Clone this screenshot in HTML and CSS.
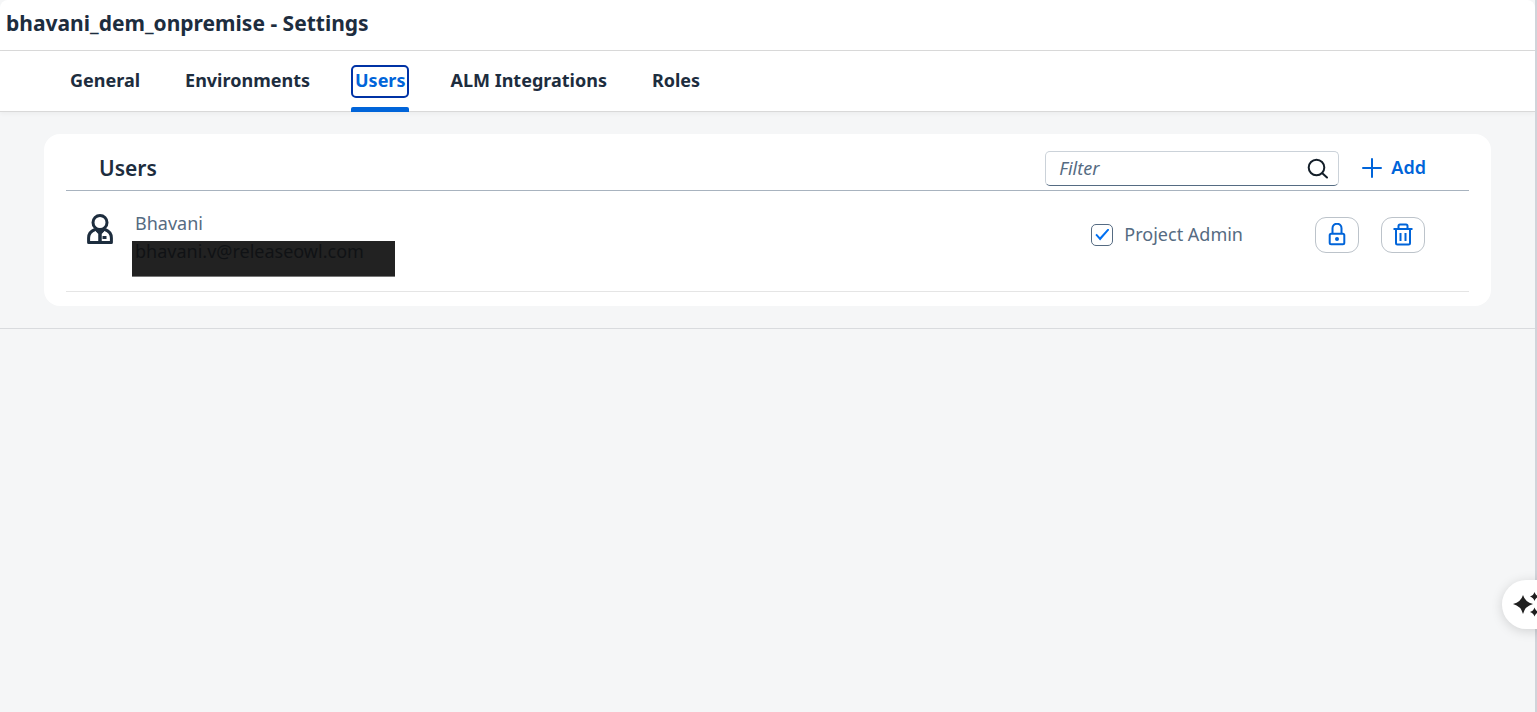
FILE: index.html
```html
<!DOCTYPE html>
<html lang="en">
<head>
<meta charset="utf-8">
<title>bhavani_dem_onpremise - Settings</title>
<link rel="stylesheet" href="styles.css">
</head>
<body>
<div class="page">
  <header class="title-bar"><h1 class="title">bhavani_dem_onpremise - Settings</h1></header>
  <nav class="tabs" aria-label="Settings sections">
    <a class="tab" href="#general"><span class="tab-label">General</span></a>
    <a class="tab" href="#environments"><span class="tab-label">Environments</span></a>
    <a class="tab tab-active" href="#users" aria-current="page"><span class="tab-label">Users</span></a>
    <a class="tab" href="#alm"><span class="tab-label">ALM Integrations</span></a>
    <a class="tab" href="#roles"><span class="tab-label">Roles</span></a>
  </nav>
  <main class="content">
    <section class="card">
      <div class="toolbar">
        <h2 class="card-title">Users</h2>
        <div class="search">
          <input class="search-input" type="text" placeholder="Filter" aria-label="Filter">
          <button class="search-button" type="button" aria-label="Search">
            <svg width="22" height="22" viewBox="0 0 22 22" fill="none" stroke="#131e29" stroke-width="2" stroke-linecap="round"><circle cx="9.500" cy="9.500" r="7.800"/><path d="M15.300 15.300l4.700 4.200"/></svg>
          </button>
        </div>
        <button class="add-button" type="button">
          <svg width="20" height="20" viewBox="0 0 20 20" fill="none" stroke="currentColor" stroke-width="2" stroke-linecap="round"><path d="M10 1v18M1 10h18"/></svg>
          Add
        </button>
      </div>
      <ul class="user-list">
        <li class="user-row">
          <svg class="user-icon" width="26" height="30" viewBox="0 0 26 30" fill="none" stroke="#1d2d3e" stroke-width="3"><circle cx="13" cy="8.500" r="7"/><path d="M8 15.500C4 17 1.600 20 1.600 24v4.400h22.800V24c0-4-2.400-7-6.400-8.500" stroke-linejoin="round"/><path d="M7.500 15.500h11L14.200 20v8h-2.400v-8z" fill="#1d2d3e" stroke-width="1"/><path d="M15.500 23.500h4" stroke-width="3"/></svg>
          <div class="user-info">
            <span class="user-name">Bhavani</span>
            <span class="user-email">bhavani.v@releaseowl.com</span>
          </div>
          <label class="admin"><input class="admin-check" type="checkbox" checked>Project Admin</label>
          <div class="actions">
            <button class="icon-button" type="button" aria-label="Lock user">
              <svg width="20" height="24" viewBox="0 0 20 24" fill="none" stroke="currentColor" stroke-width="2"><rect x="2.700" y="10.700" width="14.600" height="10.500" rx="1.500"/><path d="M5.500 10.700V5.200a4.500 4.500 0 0 1 9 0v5.500"/><circle cx="10" cy="16" r="2" fill="currentColor" stroke="none"/></svg>
            </button>
            <button class="icon-button" type="button" aria-label="Delete user">
              <svg width="20" height="24" viewBox="0 0 20 24" fill="none" stroke="currentColor" stroke-width="2"><path d="M.5 6h19"/><path d="M5.500 5.500V3a1.500 1.500 0 0 1 1.500-1.500h6a1.500 1.500 0 0 1 1.500 1.500v2.500"/><path d="M3 6.500V20a1.500 1.500 0 0 0 1.500 1.500h11a1.500 1.500 0 0 0 1.500-1.500V6.500"/><path d="M7.500 10v8M12.500 10v8"/></svg>
            </button>
          </div>
        </li>
      </ul>
    </section>
  </main>
  <button class="assistant" type="button" aria-label="Assistant">
    <svg width="32" height="28" viewBox="0 0 32 28" fill="#1f1f1f"><path d="M10 4Q12 11 20 13Q12 15 10 23Q8 15 0 13Q8 11 10 4zM21.500 1Q22.500 4.500 26 5.500Q22.500 6.500 21.500 10Q20.500 6.500 17 5.500Q20.500 4.500 21.500 1zM21.500 16.500Q22.500 20 26 21Q22.500 22 21.500 25.500Q20.500 22 17 21Q20.500 20 21.500 16.500z"/></svg>
  </button>
</div>
</body>
</html>
```
FILE: styles.css
```css
* { box-sizing: border-box; }

body {
  margin: 0;
  background: #f5f6f7;
  color: #1d2d3e;
  font-family: "Noto Sans", sans-serif;
  font-size: 18px;
}

button, input { font: inherit; }

button {
  padding: 0;
  border: 0;
  background: none;
  color: #0064d9;
  cursor: pointer;
}

svg { display: block; flex: none; }

.page {
  min-height: 100vh;
  border-right: 2px solid #d0d4da;
  overflow: hidden;
}

.title-bar {
  padding: 8px 6px 12px;
  background: #fff;
  border-bottom: 1px solid #d9d9d9;
  border-radius: 8px 8px 0 0;
}

.title {
  margin: 0;
  font-size: 21px;
  font-weight: 700;
  line-height: 30px;
}

.tabs {
  display: flex;
  gap: 37px;
  height: 61px;
  padding: 0 66px;
  background: #fff;
  border-bottom: 1px solid #d9d9d9;
  box-shadow: 0 2px 4px rgba(0, 0, 0, 0.04);
}

.tab {
  display: flex;
  flex-direction: column;
  padding-top: 14px;
  color: #1d2d3e;
  font-weight: 700;
  text-decoration: none;
}

.tab-label {
  padding: 0 2px 2px;
  border: 2px solid transparent;
  border-radius: 5px;
  line-height: 27px;
}

.tab-active { color: #0064d9; }
.tab-active .tab-label { border-color: #0032a5; }

.tab-active::after {
  content: "";
  height: 5px;
  margin: 9px 0 -1px;
  background: #0064d9;
  border-radius: 2px 2px 0 0;
}

.content {
  padding: 22px 44px;
  border-bottom: 1px solid #d9dbde;
}

.card {
  padding: 17px 22px 14px;
  background: #fff;
  border-radius: 16px;
}

.toolbar {
  display: flex;
  align-items: center;
  padding: 0 43px 4px 33px;
  border-bottom: 1px solid #a8b3bf;
}

.card-title {
  flex: 1;
  margin: 0;
  font-size: 21px;
  font-weight: 600;
  line-height: 35px;
}

.search {
  display: flex;
  align-items: center;
  width: 294px;
  height: 35px;
  border: 1px solid #cbd2d9;
  border-bottom-color: #556b82;
  border-radius: 5px;
  background: #fff;
}

.search-input {
  flex: 1;
  min-width: 0;
  padding: 0 13px 2px;
  border: 0;
  background: none;
  outline: 0;
}

.search-input::placeholder { color: #556b82; font-style: italic; opacity: 1; }

.search-button { margin-right: 9px; }

.add-button {
  display: flex;
  align-items: center;
  gap: 9px;
  margin-left: 23px;
  padding-bottom: 2px;
  font-weight: 600;
  line-height: 33px;
}

.user-list { margin: 0; padding: 0; list-style: none; }

.user-row {
  display: flex;
  align-items: flex-start;
  padding: 18px 44px 14px 21px;
  border-bottom: 1px solid #e5e5e5;
  color: #556b82;
}

.user-icon { margin-top: 5px; }

.user-info {
  display: flex;
  flex: 1;
  flex-direction: column;
  align-items: flex-start;
  padding-left: 19px;
}

.user-name { padding: 0 3px 4px; line-height: 28px; }

.user-email {
  width: 263px;
  height: 36px;
  padding: 0 3px;
  background: #222;
  border-bottom: 1px solid #777;
  color: #101215;
  line-height: 21px;
}

.admin {
  display: flex;
  align-items: center;
  gap: 11px;
  margin: 8px 72px 0 0;
  line-height: 35px;
}

.admin-check {
  appearance: none;
  display: grid;
  place-items: center;
  width: 22px;
  height: 22px;
  margin: 0;
  border: 1px solid #556b82;
  border-radius: 5px;
  background: #fff;
}

.admin-check:checked::before {
  content: "";
  width: 14px;
  height: 12px;
  background: #0070f2;
  clip-path: polygon(0 54%, 10% 44%, 33% 72%, 90% 0, 100% 10%, 34% 100%);
}

.actions { display: flex; gap: 22px; margin-top: 8px; }

.icon-button {
  display: grid;
  place-items: center;
  width: 44px;
  height: 36px;
  border: 1px solid #bcc3ca;
  border-radius: 11px;
}

.assistant {
  position: fixed;
  right: -25px;
  bottom: 83px;
  display: flex;
  align-items: center;
  width: 60px;
  height: 49px;
  padding-left: 11px;
  border-radius: 25px;
  background: #fff;
  box-shadow: 0 2px 12px rgba(0, 0, 0, 0.15);
}
```
